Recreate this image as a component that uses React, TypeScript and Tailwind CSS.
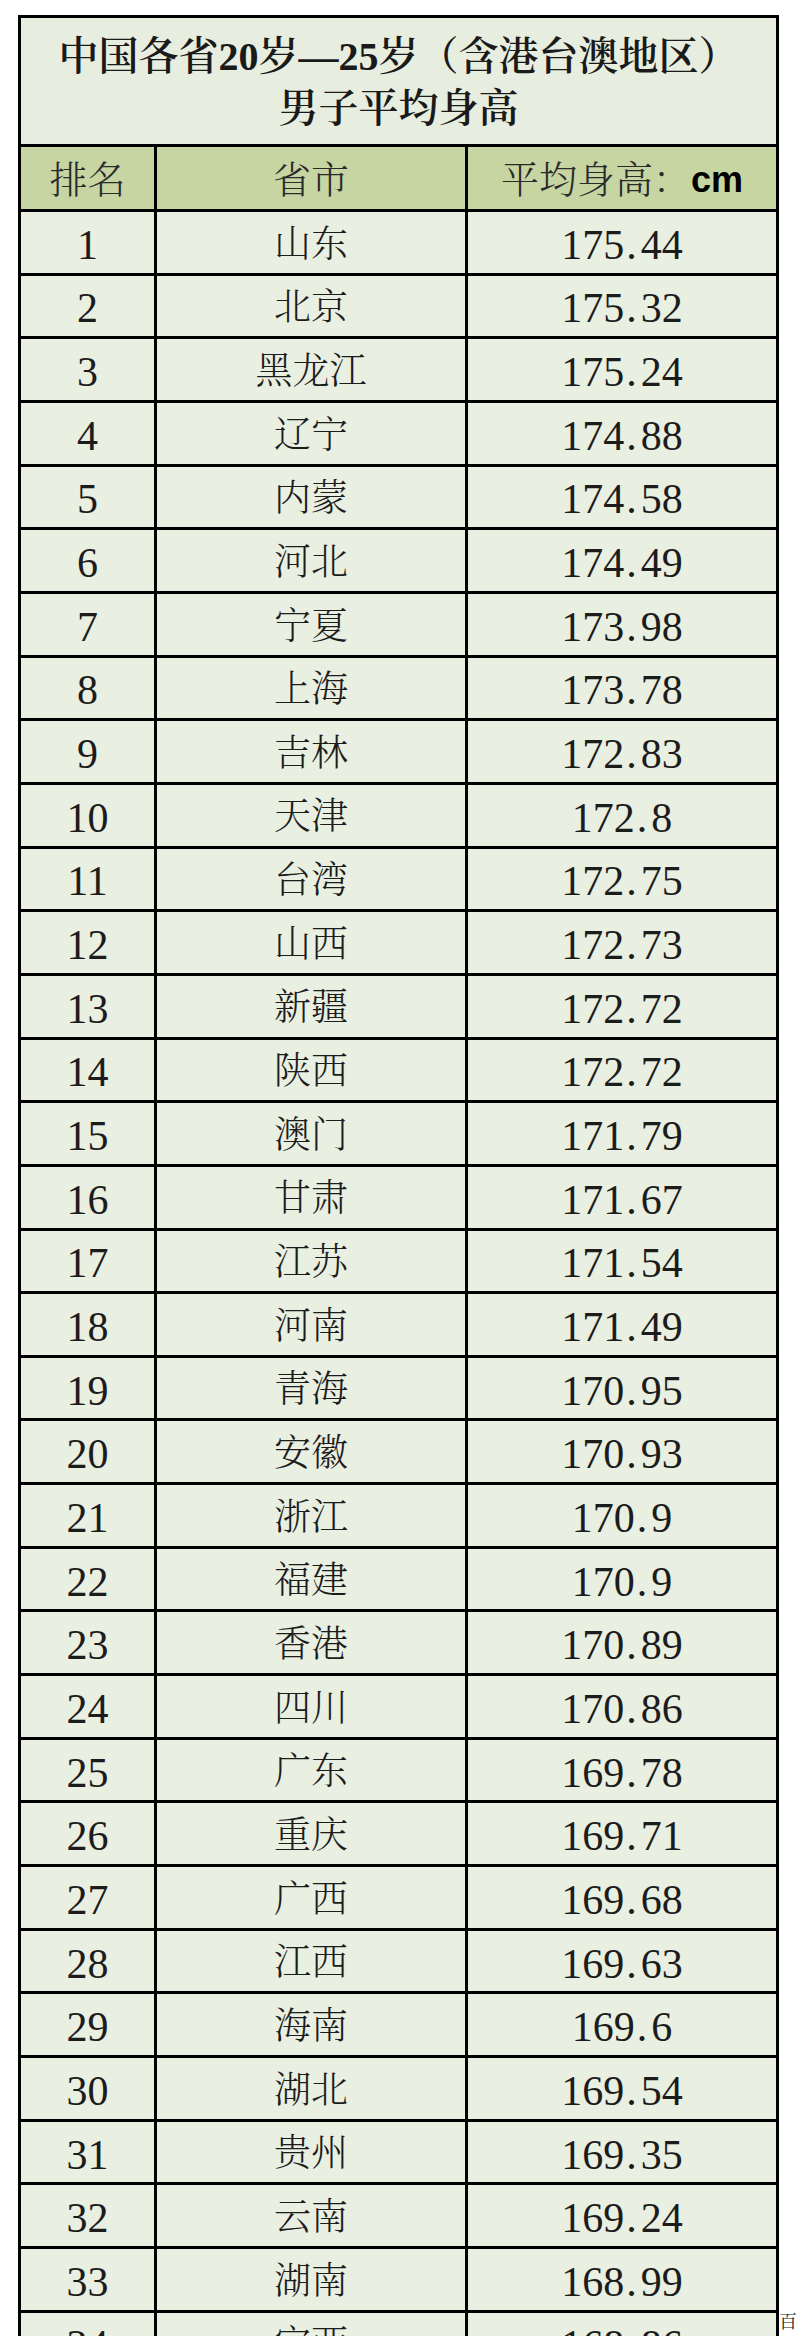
import React from "react";

const rows: [string, string, string][] = [
  ["1", "山东", "175.44"],
  ["2", "北京", "175.32"],
  ["3", "黑龙江", "175.24"],
  ["4", "辽宁", "174.88"],
  ["5", "内蒙", "174.58"],
  ["6", "河北", "174.49"],
  ["7", "宁夏", "173.98"],
  ["8", "上海", "173.78"],
  ["9", "吉林", "172.83"],
  ["10", "天津", "172.8"],
  ["11", "台湾", "172.75"],
  ["12", "山西", "172.73"],
  ["13", "新疆", "172.72"],
  ["14", "陕西", "172.72"],
  ["15", "澳门", "171.79"],
  ["16", "甘肃", "171.67"],
  ["17", "江苏", "171.54"],
  ["18", "河南", "171.49"],
  ["19", "青海", "170.95"],
  ["20", "安徽", "170.93"],
  ["21", "浙江", "170.9"],
  ["22", "福建", "170.9"],
  ["23", "香港", "170.89"],
  ["24", "四川", "170.86"],
  ["25", "广东", "169.78"],
  ["26", "重庆", "169.71"],
  ["27", "广西", "169.68"],
  ["28", "江西", "169.63"],
  ["29", "海南", "169.6"],
  ["30", "湖北", "169.54"],
  ["31", "贵州", "169.35"],
  ["32", "云南", "169.24"],
  ["33", "湖南", "168.99"],
  ["34", "宁西", "168.86"],
];

const serif = "font-['Liberation_Serif','Noto_Serif_CJK_SC','Noto_Sans_CJK_SC',serif]";

function Value({ v }: { v: string }) {
  const [a, b] = v.split(".");
  return (
    <span>
      {a}
      <span className="ml-[2px] mr-[4px]">.</span>
      {b}
    </span>
  );
}

export default function App() {
  return (
    <div className="relative w-[800px] h-[2336px] overflow-hidden bg-white">
      <div className="ml-[18px] mt-[15px] w-[761px] border-[3px] border-black bg-[#e8eedf] text-[#1c1c1c]">
        {/* Title */}
        <div
          className={`h-[129px] border-b-[3px] border-black flex flex-col items-center justify-center pt-[4px] text-[40px] leading-[52px] font-semibold text-[#1a1a1a] ${serif}`}
        >
          <div>中国各省20岁—25岁（含港台澳地区）</div>
          <div>男子平均身高</div>
        </div>
        {/* Header */}
        <div className="h-[65px] border-b-[3px] border-black bg-[#c6d5a2] flex text-[38px] text-[#2a2a2a] font-light">
          <div className={`w-[136px] border-r-[3px] border-black flex items-center justify-center pt-[4px] ${serif}`}>
            排名
          </div>
          <div className={`w-[311px] border-r-[3px] border-black flex items-center justify-center pt-[4px] ${serif}`}>
            省市
          </div>
          <div className={`flex-1 flex items-center justify-center pt-[4px] ${serif}`}>
            平均身高：
            <span className="font-['Liberation_Sans',Arial,sans-serif] font-bold text-[36px] text-black">cm</span>
          </div>
        </div>
        {/* Rows */}
        {rows.map(([rank, name, value]) => (
          <div key={rank} className="h-[63.67px] border-b-[3px] border-black flex bg-[#e9efe1]">
            <div className={`w-[136px] border-r-[3px] border-black flex items-center justify-center pt-[6px] text-[42px] ${serif}`}>
              {rank}
            </div>
            <div className={`w-[311px] border-r-[3px] border-black flex items-center justify-center pt-[4px] text-[37px] font-light ${serif}`}>
              {name}
            </div>
            <div className={`flex-1 flex items-center justify-center pt-[6px] text-[42px] ${serif}`}>
              <Value v={value} />
            </div>
          </div>
        ))}
      </div>
      <div className={`absolute left-[779px] top-[2309px] text-[18px] text-[#222] ${serif}`}>百</div>
    </div>
  );
}
